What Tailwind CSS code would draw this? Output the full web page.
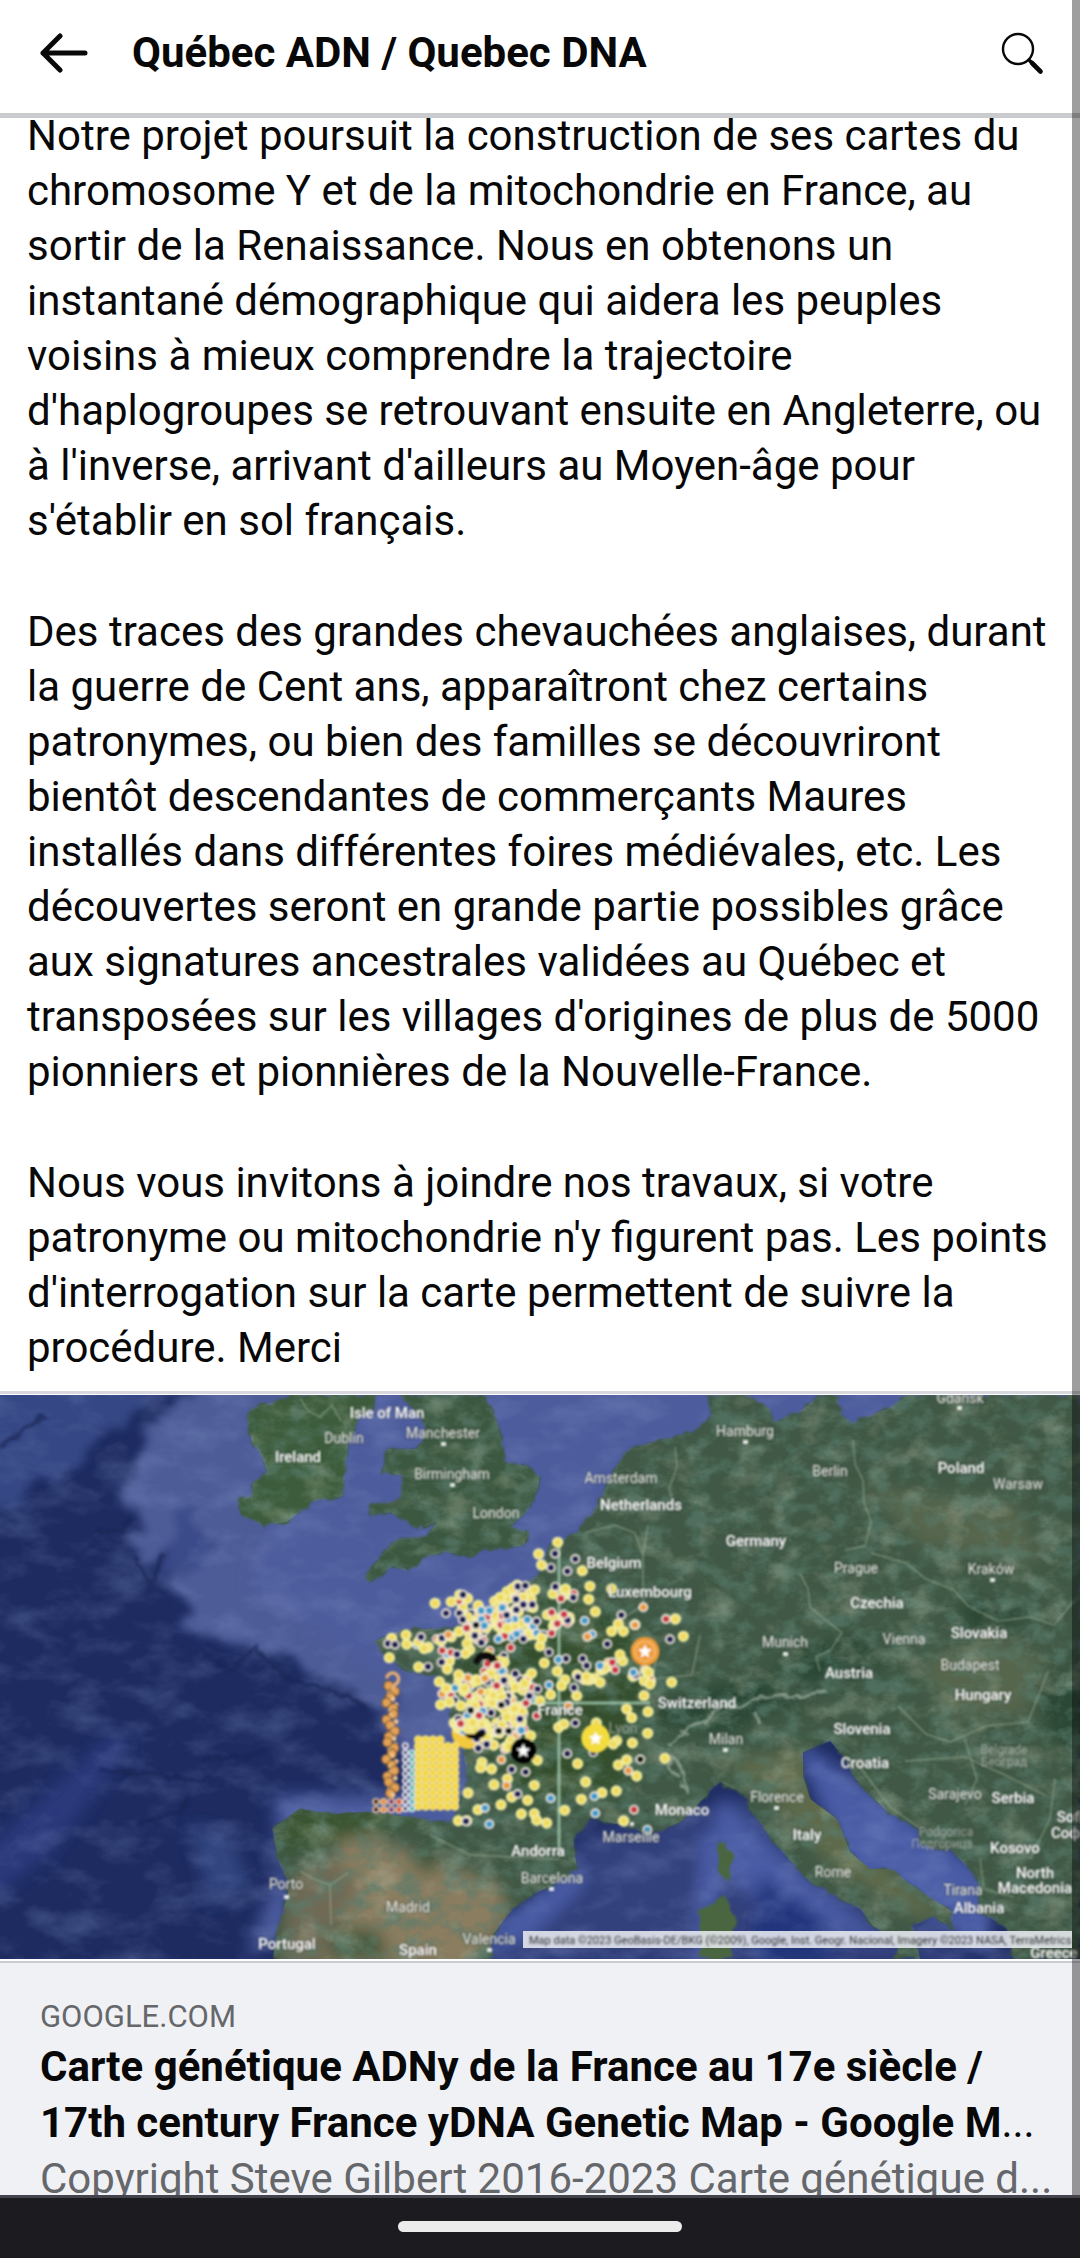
<!DOCTYPE html>
<html lang="fr">
<head>
  <meta charset="UTF-8">
  <meta name="viewport" content="width=device-width, initial-scale=1.0">
  <title>Québec ADN / Quebec DNA</title>
  <script src="https://cdn.jsdelivr.net/npm/@tailwindcss/browser@4"></script>
</head>
<body class="bg-white text-[#080809] font-[Roboto,sans-serif]">
  <div class="relative flex flex-col h-screen overflow-hidden">

    <header class="relative z-10 flex items-center shrink-0 bg-white border-b-5 border-[#c9cbce] h-[118px] pl-10 pr-9 pb-2">
      <button type="button" aria-label="Retour" class="shrink-0">
        <svg class="w-12 h-12" viewBox="0 0 48 48" fill="none" stroke="currentColor" stroke-width="5" stroke-linecap="round" stroke-linejoin="round">
          <path d="M45 24H3M20 7L3 24l17 17"/>
        </svg>
      </button>
      <h1 class="grow ml-11 text-[42px] leading-[56px] font-bold">Québec ADN / Quebec DNA</h1>
      <button type="button" aria-label="Rechercher" class="shrink-0">
        <svg class="w-11 h-11" viewBox="0 0 44 44" fill="none" stroke="currentColor" stroke-linecap="round">
          <circle cx="18" cy="18" r="15" stroke-width="2.4"/>
          <path d="M29 29l4 4" stroke-width="3.4"/>
          <path d="M32 32l8.500 8.500" stroke-width="4.600"/>
        </svg>
      </button>
    </header>

    <main class="grow min-h-0 overflow-hidden">
      <div class="-mt-2.5 px-[27px] pb-4 text-[42px] leading-[55px] space-y-14">
        <p>Notre projet poursuit la construction de ses cartes du chromosome Y et de la mitochondrie en France, au sortir de la Renaissance. Nous en obtenons un instantané démographique qui aidera les peuples voisins à mieux comprendre la trajectoire d'haplogroupes se retrouvant ensuite en Angleterre, ou à l'inverse, arrivant d'ailleurs au Moyen-âge pour s'établir en sol français.</p>
        <p>Des traces des grandes chevauchées anglaises, durant la guerre de Cent ans, apparaîtront chez certains patronymes, ou bien des familles se découvriront bientôt descendantes de commerçants Maures installés dans différentes foires médiévales, etc. Les découvertes seront en grande partie possibles grâce aux signatures ancestrales validées au Québec et transposées sur les villages d'origines de plus de 5000 pionniers et pionnières de la Nouvelle-France.</p>
        <p>Nous vous invitons à joindre nos travaux, si votre patronyme ou mitochondrie n'y figurent pas. Les points d'interrogation sur la carte permettent de suivre la procédure. Merci</p>
      </div>

      <a href="#carte" class="block border-t-3 border-[#d8d9de]">
        <svg id="carte" class="block w-full mt-px" viewBox="0 0 1080 564" role="img" aria-label="Carte satellite de l'Europe avec les marqueurs du projet">
          <defs>
            <filter id="soft"><feGaussianBlur stdDeviation="0.9"/></filter>
            <filter id="blur" x="-20%" y="-20%" width="140%" height="140%"><feGaussianBlur stdDeviation="8"/></filter>
            <filter id="shelf" x="-20%" y="-20%" width="140%" height="140%"><feTurbulence type="fractalNoise" baseFrequency="0.025" numOctaves="4" seed="5"/><feDisplacementMap in="SourceGraphic" scale="50" xChannelSelector="R" yChannelSelector="G"/><feGaussianBlur stdDeviation="4"/></filter>
            <filter id="coast"><feTurbulence type="fractalNoise" baseFrequency="0.09" numOctaves="3" seed="4"/><feDisplacementMap in="SourceGraphic" scale="9" xChannelSelector="R" yChannelSelector="G"/><feGaussianBlur stdDeviation="1"/></filter>
            <filter id="grain" x="0" y="0" width="100%" height="100%">
              <feTurbulence type="fractalNoise" baseFrequency="0.045 0.06" numOctaves="4" seed="8"/>
              <feColorMatrix values="0 0 0 0 0.10  0 0 0 0 0.20  0 0 0 0 0.15  3 0 0 0 -1.25"/>
            </filter>
            <filter id="light" x="0" y="0" width="100%" height="100%">
              <feTurbulence type="fractalNoise" baseFrequency="0.03 0.04" numOctaves="5" seed="31"/>
              <feColorMatrix values="0 0 0 0 0.50  0 0 0 0 0.55  0 0 0 0 0.42  3 0 0 0 -1.5"/>
            </filter>
            <filter id="waves" x="0" y="0" width="100%" height="100%">
              <feTurbulence type="fractalNoise" baseFrequency="0.02 0.035" numOctaves="4" seed="21"/>
              <feColorMatrix values="0 0 0 0 0.28  0 0 0 0 0.36  0 0 0 0 0.65  1.8 0 0 0 -0.8"/>
            </filter>
            <clipPath id="land">
              <path id="eire" d="M293 0L250 14 247 24 252 47 263 64 267 77 253 87 252 99 237 106 243 121 263 131 287 127 313 107 343 101 348 51 358 25 372 14 374 0z"/>
              <path id="gb" d="M400 0H485L497 27 507 67 527 71 540 81 537 97 527 117 510 131 530 137 523 151 493 154 473 161 443 157 423 164 407 177 393 171 370 187 363 184 387 154 397 144 427 141 437 127 417 134 390 117 370 121 370 111 400 104 403 81 383 77 387 54 417 54 427 41 420 21z"/>
              <path id="eu" d="M707 0L712 21 693 37 627 54 617 71 593 117 577 137 550 150 537 181 510 194 497 204 498 214 470 214 457 197 460 231 427 234 403 234 387 241 373 247 385 261 410 277 440 284 447 304 453 327 463 354 467 384 460 414 450 427 403 421 360 417 333 419 300 414 272 434 280 471 290 491 277 537 273 564H493L490 544 507 521 520 507 557 487 577 474 573 444 590 424 627 431 650 441 680 427 720 387 740 397 757 424 777 451 810 487 860 514 873 531 900 547 895 564H920L913 531 933 521 953 534V517L907 487 893 474 870 474 850 457 837 424 810 404 803 381V357L830 346 843 361 853 381 887 417 920 434V451L953 457 978 484 980 517 1007 534 1013 564H1080V0H907L887 14 853 27 842 21 837 0H820L803 14 773 27 770 14 747 0z"/>
            </clipPath>
          </defs>

          <!-- mer -->
          <rect width="1080" height="564" fill="#1d2b61"/>
          <g filter="url(#shelf)">
            <path fill="#344684" d="M-20-40H230L110 35 60 70 10 110-20 120z"/>
            <path fill="#4e5c97" d="M230-40L155 28 132 75 130 140 155 170 170 140 185 120 220 150 175 195 195 240 245 250 300 280 345 290 395 305 410 420 445 440 1180 250 1180-40z"/>
            <path fill="#3a4b8a" d="M165 150l20-40 35 50-50 30z"/>
          </g>
          <g filter="url(#blur)">
            <path fill="#4d5c9c" d="M300-20h800v200l-540 60-180 40-130-90z"/>
            <path fill="#4c5c9e" d="M275 400h190v40H285l5 90-45 35 15-40 18-50z"/>
            <path fill="#33447f" d="M190 430l40 10 20 50-40 20z"/>
            <path fill="#29397a" d="M110 340l20 10-50 70-30 40-70 50v-50z"/>
            <path fill="#30417c" d="M490 570L580 440 760 400 980 570z"/>
            <path fill="#4a5ba5" d="M790 340l90 60 110 80v80l-140-80zM720 400l70 70 100 80-120-30-60-60z"/>
            <path fill="#4a5ba5" d="M485 564l10-35 85-60 5 20-50 50zM700 440h20v60l-15 64h-10z"/>
            <path fill="#22357d" d="M760 480l60 40 20 44h-90z"/>
          </g>
          <rect width="1080" height="564" filter="url(#waves)" opacity=".35"/>
          <g fill="none" stroke="#17224f" stroke-width="4" opacity=".55" filter="url(#coast)">
            <path d="M135 162l16 28 13-30M200 255l30 20 25-22 32 30 50 14 30 16M100 376l50 2 40 8 20-4M205 362l40 0 20-6M140 428l40-12 10-10M0 52l45-32M96 136l25 2 8-16"/>
          </g>

          <!-- terres -->
          <g filter="url(#coast)">
            <use href="#eire" fill="#3d5c3b"/>
            <use href="#gb" fill="#3c5840"/>
            <use href="#eu" fill="#3f5844"/>
            <path d="M716 448l9-2 8 16-4 24-10-8zM700 515l25-14 10 20-5 43h-30z" fill="#4a6641"/>
          </g>
          <g clip-path="url(#land)">
            <g filter="url(#blur)">
              <path fill="#8a7d61" d="M340 435l70 20 90 35 10 30-40 54H320l-30-30 40-60z"/>
              <path fill="#706b54" d="M290 480l40-20 30 30-40 84h-40z"/>
              <path fill="#3a5531" d="M275 412h170l-70 26-90 20z"/>
              <path fill="#475a3e" d="M410 455l30 5-5 20-20-5zM330 530l50 5 10 30h-60z"/>
              <path fill="#5e6b4b" d="M720 365l90-10 20 50 60 70 60 50-40-5-80-50-60-70z"/>
              <path fill="#56664e" d="M915 270l70-30 60 20-20 60-70 5zM860 90l160 20 20 60-120-20z"/>
              <path fill="#2a4636" d="M630 320l120-40 60 20-90 40zM770 270l80-30 40 30-80 20zM1040 290l40-20v90l-30-20zM960 200l80 20-70 20z"/>
              <path fill="#34502f" d="M460 250l110-60 80 60-20 140-110 20-50-80z"/>
            </g>
            <rect width="1080" height="564" filter="url(#grain)" opacity=".65"/>
            <rect width="1080" height="564" filter="url(#light)" opacity=".3"/>
            <g fill="none" stroke="#a9bba0" stroke-width="1.500" opacity=".5" filter="url(#soft)">
              <path d="M300 3l8 13 12 6 12-12 9 16M675 52l2 20-8 22 5 14M585 138l30-8 20 8 8 22 5-30M643 160v50l-30 20M853 45l2 24 8 16 1 22 7 20-6 24-20 4M871 158l35 10 20 16 28 11 14 16 30 15 32-4 24 8 20-24M800 178l8 16 2 18 32 26-12 18-14 6 4 14M700 240l-8 40-40 4 6-30M898 311l28 28 24 8 36-16 42-4 20-50M965 344l12 40-12 26M860 372l30 40 28 20M905 366l60-4 40 18 40 20M1055 384l-5 40-20 40M300 476l14 8 16 6 1 40M330 490l18-12M980 464l4 30 30 8M430 440l40 20 90 4"/>
            </g>
            <path d="M668 350l14-10 5-8 20-6 8-12 14-4 10 4 16-10 20-4 20 2 30-6M680 385l-10-12 2-14 10 14 6 26-8-10M690 340l-8-4 10-6M760 330l-6-14" fill="none" stroke="#b9c6b9" stroke-width="3" opacity=".55" filter="url(#coast)"/>
          </g>

          <!-- quadrillage sur la France -->
          <path d="M559 150V458M500 308H650" fill="none" stroke="#9fc6ac" stroke-width="3" opacity=".85" filter="url(#soft)"/>

          <!-- marqueurs, sur une grille trois fois plus fine que la carte -->
          <g filter="url(#soft)">
            <g transform="translate(360 124) scale(.33333)">
              <circle cx="325" cy="640" r="50" fill="#f3c93e"/>
              <g id="dots"></g>
              <path d="M340 432a38 38 0 0 1 74-8l-24 8-6-10-22 2-8 14z" fill="#0b0b0b"/>
              <path d="M312 644l30 2 14-12 24 8a36 26 0 0 1-68 2z" fill="#0b0b0b"/>
              <circle cx="490" cy="695" r="38" fill="#050505"/>
              <path fill="#fff" d="M490 674l6 14 15 1-12 10 4 15-13-8-13 8 4-15-12-10 15-1z"/>
              <circle cx="707" cy="658" r="43" fill="#f3dc3c"/>
              <path fill="#fff" d="M707 637l6 14 15 1-12 10 4 15-13-8-13 8 4-15-12-10 15-1z"/>
              <circle cx="855" cy="397" r="43" fill="#ee9a35"/>
              <circle cx="855" cy="397" r="30" fill="none" stroke="#f8c27d" stroke-width="4"/>
              <path fill="#fff" d="M855 376l6 14 15 1-12 10 4 15-13-8-13 8 4-15-12-10 15-1z"/>
              <g id="stack"></g>
            </g>
          </g>

          <!-- villes et pays -->
          <g filter="url(#soft)" stroke="#222" stroke-opacity=".45" stroke-width="2" paint-order="stroke" fill="#e6e9e2" text-anchor="middle">
            <g font-size="14">
              <text x="344" y="48">Dublin</text>
              <text x="443" y="43">Manchester</text>
              <text x="452" y="84">Birmingham</text>
              <text x="496" y="123">London</text>
              <text x="621" y="88">Amsterdam</text>
              <text x="745" y="41">Hamburg</text>
              <text x="960" y="8">Gdańsk</text>
              <text x="830" y="81">Berlin</text>
              <text x="1018" y="94">Warsaw</text>
              <text x="856" y="178">Prague</text>
              <text x="991" y="179">Kraków</text>
              <text x="785" y="252">Munich</text>
              <text x="904" y="249">Vienna</text>
              <text x="970" y="275">Budapest</text>
              <text x="726" y="349">Milan</text>
              <text x="777" y="407">Florence</text>
              <text x="955" y="404">Sarajevo</text>
              <text x="833" y="482">Rome</text>
              <text x="963" y="500">Tirana</text>
              <text x="286" y="494">Porto</text>
              <text x="408" y="517">Madrid</text>
              <text x="489" y="549">Valencia</text>
              <text x="552" y="488">Barcelona</text>
              <text x="631" y="447">Marseille</text>
              <text x="623" y="338" opacity=".5">Lyon</text>
            </g>
            <g font-size="12" opacity=".5">
              <text x="1004" y="359">Belgrade</text>
              <text x="1004" y="371">Београд</text>
              <text x="946" y="441">Podgorica</text>
              <text x="942" y="453">Подгорица</text>
            </g>
            <g font-size="15" font-weight="500" fill="#fff">
              <text x="387" y="23">Isle of Man</text>
              <text x="298" y="67">Ireland</text>
              <text x="641" y="115">Netherlands</text>
              <text x="614" y="173">Belgium</text>
              <text x="650" y="202">Luxembourg</text>
              <text x="756" y="151">Germany</text>
              <text x="961" y="78">Poland</text>
              <text x="877" y="213">Czechia</text>
              <text x="979" y="243">Slovakia</text>
              <text x="849" y="283">Austria</text>
              <text x="983" y="305">Hungary</text>
              <text x="697" y="313">Switzerland</text>
              <text x="862" y="339">Slovenia</text>
              <text x="865" y="373">Croatia</text>
              <text x="1013" y="408">Serbia</text>
              <text x="1074" y="427">Sofia</text>
              <text x="1074" y="443">София</text>
              <text x="1015" y="458">Kosovo</text>
              <text x="1035" y="483">North</text>
              <text x="1035" y="498">Macedonia</text>
              <text x="979" y="518">Albania</text>
              <text x="807" y="445">Italy</text>
              <text x="682" y="420">Monaco</text>
              <text x="560" y="320">France</text>
              <text x="538" y="461">Andorra</text>
              <text x="418" y="560">Spain</text>
              <text x="287" y="554">Portugal</text>
              <text x="1054" y="563">Greece</text>
            </g>
          </g>
          <g fill="#fff" opacity=".85" filter="url(#soft)">
            <path d="M441 47h5v4h-5zM450 88h5v4h-5zM743 45h5v4h-5zM957 11h5v4h-5zM990 183h5v4h-5zM783 257h5v4h-5zM723 353h5v4h-5zM774 411h5v4h-5zM284 500h5v4h-5zM549 492h5v4h-5zM487 553h5v4h-5zM630 427h4v4h-4z"/>
          </g>

          <!-- mentions -->
          <rect x="523" y="536" width="549" height="17" fill="#e8eaf0" opacity=".88"/>
          <text x="529" y="549" font-size="11" fill="#333" filter="url(#soft)">Map data ©2023 GeoBasis-DE/BKG (©2009), Google, Inst. Geogr. Nacional, Imagery ©2023 NASA, TerraMetrics</text>
        </svg>

        <div class="mt-0.5 border-t-2 border-[#c9cbd1] bg-[#f0f1f5] px-10 pt-8 text-[42px]">
          <p class="text-[31px] leading-[44px] text-[#65676b]">GOOGLE.COM</p>
          <h2 class="leading-[56px] font-bold">Carte génétique ADNy de la France au 17e siècle / 17th century France yDNA Genetic Map - Google M<span class="font-normal">...</span></h2>
          <p class="leading-[55px] text-[#65676b] whitespace-nowrap">Copyright Steve Gilbert 2016-2023 Carte génétique d...</p>
        </div>
      </a>
      <div class="absolute top-0 right-0 bottom-[63px] z-20 w-2 bg-black/38"></div>
    </main>

    <footer class="relative z-10 flex justify-center shrink-0 h-[63px] border-t-3 border-[#43434b] bg-[#1c1b20] pt-[23px]">
      <div class="w-[284px] h-[11px] rounded-full bg-[#ececec]"></div>
    </footer>
  </div>

  <script>
    const NS = 'http://www.w3.org/2000/svg';
    const dots = document.getElementById('dots');
    const stack = document.getElementById('stack');

    function circle(parent, x, y, r, fill, stroke, width) {
      const c = document.createElementNS(NS, 'circle');
      c.setAttribute('cx', x);
      c.setAttribute('cy', y);
      c.setAttribute('r', r);
      c.setAttribute('fill', fill);
      if (stroke) {
        c.setAttribute('stroke', stroke);
        c.setAttribute('stroke-width', width);
      }
      parent.appendChild(c);
    }

    // y: jaune, n: bleu nuit, b: bleu, r: rouge, o: orange, k: noir
    const colors = { n: '#1c2054', b: '#3d9ccb', r: '#c93a3f', o: '#e89a3a', k: '#0c1a10' };
    function dot(kind, x, y) {
      if (kind === 'y') {
        circle(dots, x, y, 15, '#eee271', '#f5f0b0', 4);
        circle(dots, x, y, 5, '#f2cf55');
      } else {
        circle(dots, x, y, 15, '#f0e8e0');
        circle(dots, x, y, 10, colors[kind]);
      }
    }

    // petit générateur à graine fixe
    let seed = 17;
    const rnd = () => (seed = (seed * 16807) % 2147483647) / 2147483647;

    // zones denses : centre x, y, rayons, nombre
    const clusters = [
      [470, 240, 68, 45, 30], [370, 305, 75, 48, 34], [300, 245, 28, 20, 7],
      [470, 325, 60, 55, 20], [320, 370, 60, 40, 12], [205, 365, 40, 25, 7],
      [300, 515, 60, 50, 20], [400, 500, 75, 65, 24], [420, 590, 95, 70, 52],
      [470, 520, 55, 60, 16], [340, 600, 60, 50, 20], [590, 300, 40, 26, 13],
      [615, 230, 38, 24, 7], [250, 420, 40, 35, 6], [400, 670, 60, 30, 10],
      [410, 420, 45, 40, 6], [540, 360, 25, 30, 6], [690, 465, 40, 25, 8], [765, 445, 35, 25, 7], [850, 470, 32, 28, 8]
    ];
    const kinds = 'yyyyyyyynnbrroyny';
    clusters.forEach(([cx, cy, rx, ry, n]) => {
      for (let i = 0; i < n; i++) {
        const a = rnd() * 6.283, d = Math.sqrt(rnd());
        dot(kinds[Math.floor(rnd() * kinds.length)], cx + Math.cos(a) * rx * d, cy + Math.sin(a) * ry * d);
      }
    });

    const places = {
      y: [[593, 70], [536, 105], [545, 138], [667, 155], [690, 202], [686, 241], [225, 253], [706, 278], [95, 358], [138, 348], [140, 376], [88, 416], [176, 444], [238, 488], [296, 467], [242, 557], [262, 450], [850, 265, 'o'], [755, 337], [790, 337], [775, 315], [825, 317], [946, 300], [970, 352], [780, 407], [515, 463], [553, 432], [592, 457], [615, 482], [572, 527], [650, 530], [540, 545], [605, 500], [596, 625], [612, 615], [653, 734], [677, 789], [523, 799], [532, 724], [324, 822], [423, 857], [354, 872], [503, 844], [455, 834], [484, 885], [523, 884], [530, 904], [560, 912], [614, 874], [664, 841], [726, 821], [769, 816], [791, 906], [800, 723], [775, 738], [830, 771], [915, 718], [817, 672], [863, 643], [770, 665], [760, 675], [709, 612], [800, 570], [815, 596], [864, 578], [852, 530], [870, 495], [935, 490], [366, 730], [395, 750], [402, 797], [442, 780], [295, 905], [320, 905], [362, 746], [720, 490], [755, 210], [512, 650]],
      n: [[585, 104], [573, 146], [646, 120], [622, 157], [586, 203], [640, 236], [258, 283], [298, 283], [308, 302], [496, 200], [517, 257], [490, 257], [468, 241], [440, 288], [84, 374], [105, 377], [183, 354], [246, 357], [204, 443], [291, 406], [364, 371], [618, 419], [668, 419], [680, 440], [784, 288], [742, 375], [930, 361], [567, 400], [490, 360], [530, 307], [533, 510], [642, 506], [466, 464], [646, 612], [622, 704], [700, 700], [455, 751], [497, 759], [473, 825], [380, 676], [355, 688], [432, 484], [318, 907], [480, 600], [508, 531]],
      b: [[364, 275], [388, 275], [674, 305], [696, 346], [720, 440], [595, 422], [572, 838], [703, 832], [706, 883], [375, 867], [388, 916], [862, 932], [820, 460], [373, 320], [427, 266], [470, 345], [502, 302], [567, 498], [415, 360], [484, 634]],
      r: [[575, 280], [612, 286], [592, 314], [575, 343], [918, 300], [822, 872], [452, 386], [320, 327], [410, 500], [412, 440], [757, 430], [302, 614], [530, 590]],
      o: [[805, 755], [265, 347], [625, 562], [424, 722], [375, 478], [825, 318], [682, 353], [440, 800]],
      k: [[841, 721], [348, 318], [332, 574], [424, 558], [446, 636], [416, 636]]
    };
    Object.entries(places).forEach(([kind, list]) => list.forEach(([x, y, k]) => dot(k || kind, x, y)));

    // colonnes de marqueurs en attente, au large
    for (let x = 175; x <= 290; x += 22) {
      for (let y = x < 250 ? 662 : 682; y <= 880; y += 20) {
        circle(stack, x, y, 12, '#f3d64f', '#f6e794', 3);
      }
    }
    for (let y = 680; y <= 880; y += 21) {
      circle(stack, 136, y, 8, '#1c2054', '#ece7f2', 5);
      if (y > 690) circle(stack, 156, y, 8, '#45a6a8', '#cbe9e6', 5);
    }
    for (let y = 500; y <= 830; y += 17) {
      circle(stack, 92 + Math.sin(y) * 13, y, 14, '#e2a257', '#7d5634', 4);
      circle(stack, 98 - Math.sin(y) * 11, y + 6, 7, '#f3cb93');
    }
    [848, 872].forEach(y => {
      ['#111111', '#e08a3a', '#6b2a86', '#d64a4a'].forEach((c, i) => circle(stack, 48 + i * 23, y, 9, c, '#f2c9a0', 4));
    });
    const hook = document.createElementNS(NS, 'path');
    hook.setAttribute('d', 'M80 478a18 18 0 1 1 26 18q-8 6-8 16');
    hook.setAttribute('fill', 'none');
    hook.setAttribute('stroke', '#e3ad75');
    hook.setAttribute('stroke-width', '10');
    stack.appendChild(hook);
  </script>
</body>
</html>
